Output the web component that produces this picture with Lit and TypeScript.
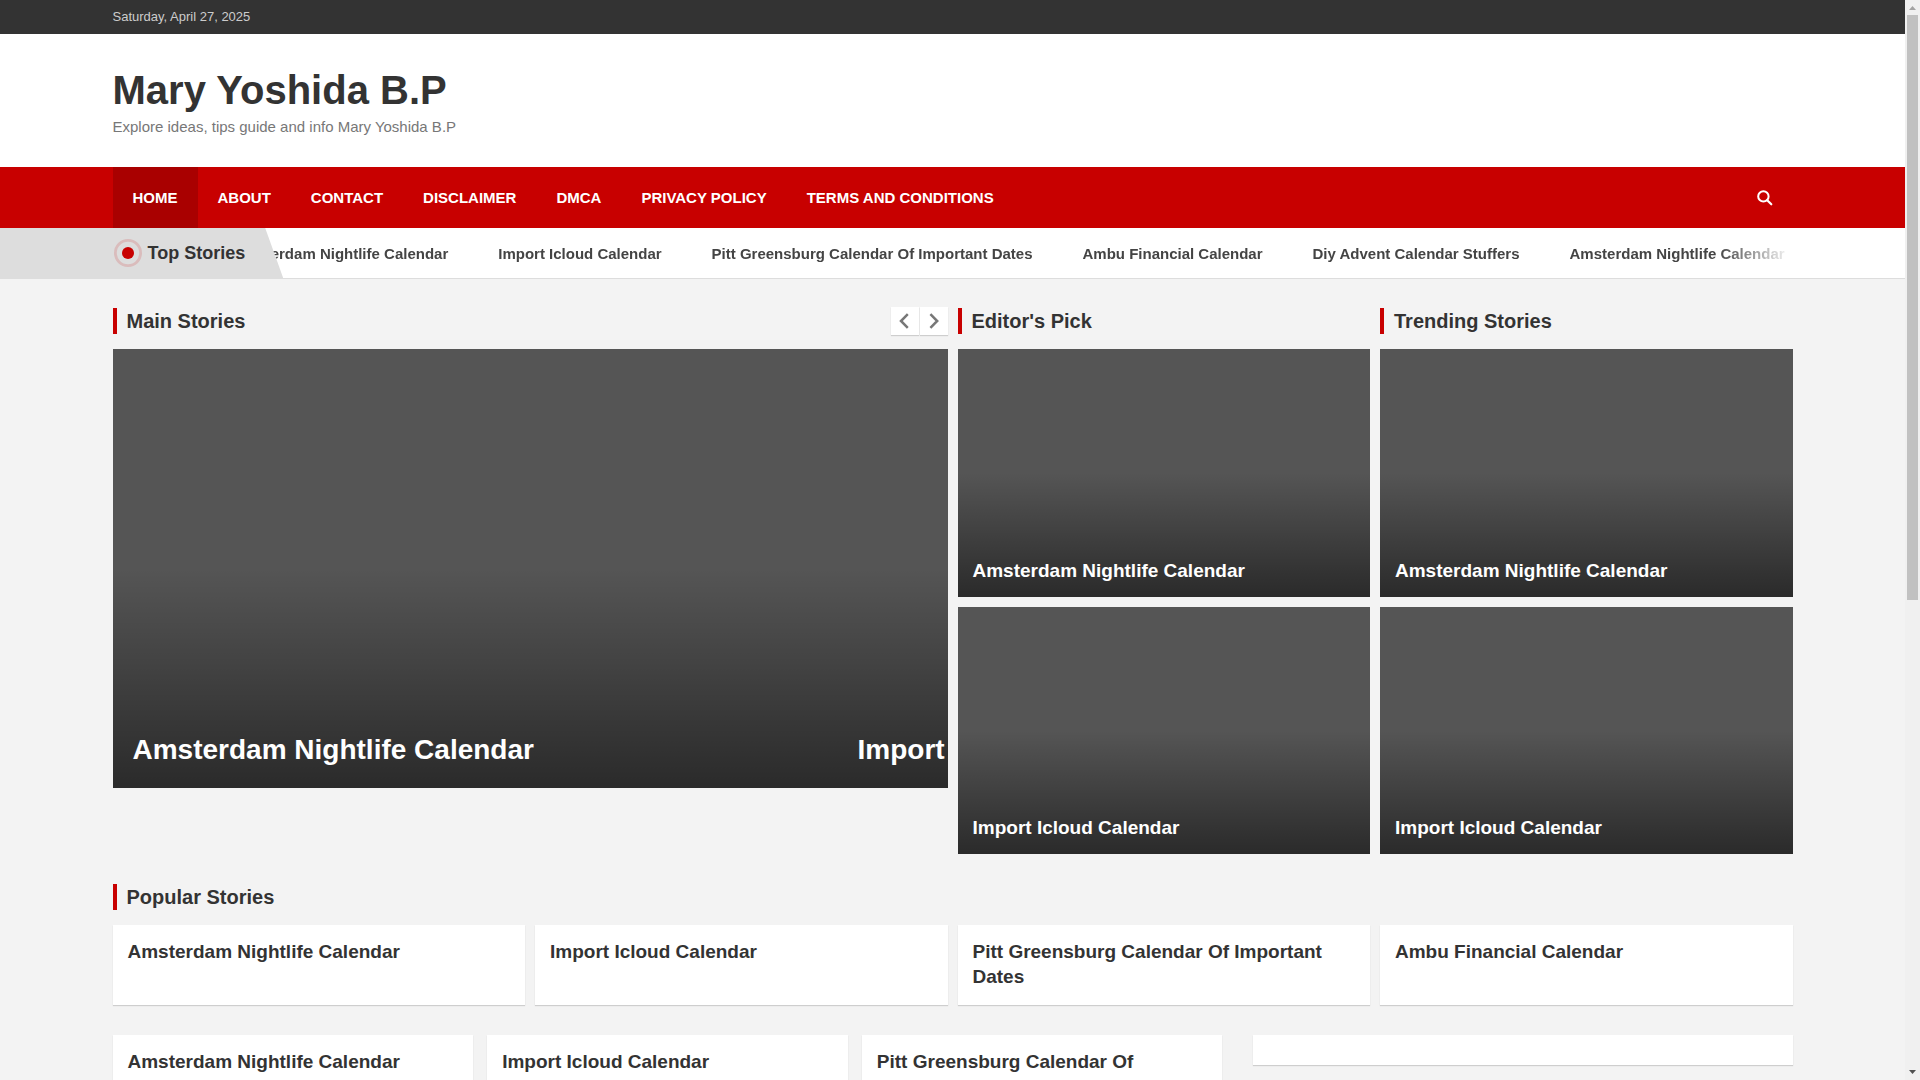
import { LitElement, html, css } from "lit";
import { customElement, property } from "lit/decorators.js";

const NAV = ["Home", "About", "Contact", "Disclaimer", "DMCA", "Privacy Policy", "Terms And Conditions"];

const STORIES = [
  "Amsterdam Nightlife Calendar",
  "Import Icloud Calendar",
  "Pitt Greensburg Calendar Of Important Dates",
  "Ambu Financial Calendar",
  "Diy Advent Calendar Stuffers",
];

const TICKER = [...STORIES, STORIES[0]];

/** Section heading with the red marker; the slot holds optional controls. */
@customElement("section-title")
class SectionTitle extends LitElement {
  @property() label = "";

  static styles = css`
    :host {
      display: flex;
      align-items: center;
      justify-content: space-between;
      height: 26px;
      margin-bottom: 15px;
    }
    .title {
      margin: 0;
      padding-left: 10px;
      border-left: 4px solid #c80000;
      color: #333;
      font-size: 20px;
      line-height: 26px;
      font-weight: 700;
    }
  `;

  render() {
    return html`<h2 class="title">${this.label}</h2>
      <slot></slot>`;
  }
}

/** Dark picture tile with the story title laid at its foot. */
@customElement("story-tile")
class StoryTile extends LitElement {
  @property() label = "";

  static styles = css`
    :host {
      display: flex;
      align-items: flex-end;
      box-sizing: border-box;
      aspect-ratio: 5 / 3;
      padding: 14px 15px;
      background: linear-gradient(transparent 50%, rgba(0, 0, 0, 0.5)) #555;
    }
    .title {
      margin: 0;
      font-size: 19px;
      line-height: 25px;
    }
    .link {
      color: #fff;
      text-decoration: none;
    }
  `;

  render() {
    return html`<h3 class="title"><a class="link" href="#">${this.label}</a></h3>`;
  }
}

/** White card holding a story title. */
@customElement("story-card")
class StoryCard extends LitElement {
  @property() label = "";

  static styles = css`
    :host {
      display: block;
      box-sizing: border-box;
      padding: 14px 15px 16px;
      background: #fff;
      box-shadow: 0 1px 1px rgba(0, 0, 0, 0.15);
    }
    .title {
      margin: 0;
      font-size: 19px;
      line-height: 25px;
    }
    .link {
      color: #333;
      text-decoration: none;
    }
  `;

  render() {
    return html`<h3 class="title"><a class="link" href="#">${this.label}</a></h3>`;
  }
}

@customElement("app-root")
class AppRoot extends LitElement {
  static styles = css`
    :host {
      display: grid;
      grid-template-columns: minmax(0, 1fr) 15px;
      height: 100vh;
      background: #f3f3f3;
      color: #333;
      font-family: "Liberation Sans", Arial, sans-serif;
    }
    .page {
      height: 100vh;
      overflow-x: hidden;
      overflow-y: auto;
      scrollbar-width: none;
    }
    .container {
      box-sizing: border-box;
      width: 100%;
      max-width: 1710px;
      margin: 0 auto;
      padding: 0 15px;
    }

    .topbar {
      background: #333;
      color: #ccc;
      font-size: 13px;
      line-height: 34px;
    }
    .brand {
      padding: 30px 0;
      background: #fff;
    }
    .site-title {
      margin: 0;
      font-size: 40px;
      line-height: 52px;
    }
    .site-title a {
      color: #333;
      text-decoration: none;
    }
    .tagline {
      margin: 0;
      color: #777;
      font-size: 15px;
      line-height: 21px;
    }

    .navbar {
      background: #c80000;
    }
    .nav-row {
      display: flex;
      justify-content: space-between;
    }
    .menu {
      display: flex;
      margin: 0;
      padding: 0;
      list-style: none;
    }
    .menu a {
      display: block;
      padding: 0 20px;
      color: #fff;
      font-size: 15px;
      line-height: 61px;
      font-weight: 700;
      text-transform: uppercase;
      text-decoration: none;
    }
    .menu a.active {
      background: #a90000;
    }
    .search {
      display: flex;
      align-items: center;
      padding: 0 20px;
      border: 0;
      background: none;
      color: #fff;
    }

    .ticker {
      overflow: hidden;
      border-bottom: 1px solid #ddd;
      background: #fff;
    }
    .ticker-row {
      display: flex;
      height: 50px;
    }
    .ticker-label {
      position: relative;
      z-index: 1;
      display: flex;
      flex: none;
      align-items: center;
      gap: 6px;
      padding: 0 38px 0 1px;
      background: #ddd;
      clip-path: polygon(-100vw 0, calc(100% - 18px) 0, 100% 100%, -100vw 100%);
    }
    .ticker-label::before {
      content: "";
      position: absolute;
      top: 0;
      right: 100%;
      width: 100vw;
      height: 100%;
      background: #ddd;
    }
    .ticker-title {
      margin: 0;
      font-size: 18px;
      line-height: 24px;
    }
    .marquee {
      display: flex;
      flex: 1;
      gap: 50px;
      min-width: 0;
      margin-left: -50px;
      overflow: hidden;
      white-space: nowrap;
      mask-image: linear-gradient(to right, #000 calc(100% - 75px), transparent);
    }
    .marquee a {
      flex: none;
      color: #444;
      font-size: 15px;
      line-height: 52px;
      font-weight: 700;
      text-decoration: none;
    }

    .content {
      padding-top: 29px;
    }
    .featured {
      display: grid;
      grid-template-columns: repeat(4, minmax(0, 1fr));
      gap: 10px;
      align-items: start;
      margin-bottom: 30px;
    }
    .wide {
      grid-column: span 2;
    }
    .stack {
      display: grid;
      gap: 10px;
    }
    .arrows {
      display: flex;
      gap: 1px;
    }
    .arrow {
      display: grid;
      place-items: center;
      width: 28px;
      height: 28px;
      padding: 0;
      border: 0;
      background: #fff;
      box-shadow: 0 1px 1px rgba(0, 0, 0, 0.15);
      color: #777;
    }
    .slider {
      display: flex;
      align-items: flex-end;
      aspect-ratio: 19 / 10;
      overflow: hidden;
      background: linear-gradient(transparent 50%, rgba(0, 0, 0, 0.5)) #555;
    }
    .slide {
      box-sizing: border-box;
      flex: 0 0 calc(100% - 110px);
      margin: 0;
      padding: 20px;
      font-size: 28px;
      line-height: 36px;
    }
    .slide a {
      color: #fff;
      text-decoration: none;
    }
    .popular {
      display: grid;
      grid-template-columns: repeat(4, minmax(0, 1fr));
      gap: 10px;
      margin-bottom: 30px;
    }
    .lower {
      display: grid;
      grid-template-columns: minmax(0, 37fr) minmax(0, 18fr);
      gap: 30px;
      align-items: start;
    }
    .posts {
      display: grid;
      grid-template-columns: repeat(3, minmax(0, 1fr));
      gap: 14px;
    }
    .widget {
      padding: 15px;
      background: #fff;
      box-shadow: 0 1px 1px rgba(0, 0, 0, 0.15);
    }

    .scrollbar {
      display: flex;
      flex-direction: column;
      background: #f0f0f0;
    }
    .scrollbar svg {
      flex: none;
      display: block;
    }
    .thumb {
      flex: 39;
      margin: 0 2px;
      background: #c1c1c1;
    }
    .rest {
      flex: 31;
    }
  `;

  render() {
    return html`
      <div class="page">
        <header>
          <div class="topbar"><div class="container">Saturday, April 27, 2025</div></div>
          <div class="brand">
            <div class="container">
              <h1 class="site-title"><a href="#">Mary Yoshida B.P</a></h1>
              <p class="tagline">Explore ideas, tips guide and info Mary Yoshida B.P</p>
            </div>
          </div>
          <nav class="navbar">
            <div class="container nav-row">
              <ul class="menu">
                ${NAV.map((n, i) => html`<li><a class=${i === 0 ? "active" : ""} href="#">${n}</a></li>`)}
              </ul>
              <button class="search" aria-label="Search">
                <svg width="16" height="16" viewBox="0 0 16 16" fill="none" stroke="currentColor" stroke-width="2">
                  <circle cx="6.4" cy="6.4" r="5.2" />
                  <path d="M10.2 10.2 14.3 14.3" stroke-width="2.2" stroke-linecap="round" />
                </svg>
              </button>
            </div>
          </nav>
          <div class="ticker">
            <div class="container ticker-row">
              <div class="ticker-label">
                <svg width="28" height="28" viewBox="0 0 28 28">
                  <circle cx="14" cy="14" r="12.6" fill="none" stroke="#c80000" stroke-opacity="0.15" stroke-width="2.8" />
                  <circle cx="14" cy="14" r="6" fill="#c80000" />
                </svg>
                <h2 class="ticker-title">Top Stories</h2>
              </div>
              <div class="marquee">${TICKER.map((s) => html`<a href="#">${s}</a>`)}</div>
            </div>
          </div>
        </header>

        <main class="container content">
          <div class="featured">
            <section class="wide">
              <section-title label="Main Stories">
                <div class="arrows">
                  <button class="arrow" aria-label="Previous">
                    <svg width="16" height="16" viewBox="0 0 16 16" fill="none" stroke="currentColor" stroke-width="2.5">
                      <path d="M10.8 1.2 4 8l6.8 6.8" />
                    </svg>
                  </button>
                  <button class="arrow" aria-label="Next">
                    <svg width="16" height="16" viewBox="0 0 16 16" fill="none" stroke="currentColor" stroke-width="2.5">
                      <path d="M4.4 1.2 11.2 8l-6.8 6.8" />
                    </svg>
                  </button>
                </div>
              </section-title>
              <div class="slider">
                ${STORIES.slice(0, 2).map((s) => html`<h3 class="slide"><a href="#">${s}</a></h3>`)}
              </div>
            </section>
            ${["Editor's Pick", "Trending Stories"].map(
              (t) => html`<section>
                <section-title label=${t}></section-title>
                <div class="stack">
                  ${STORIES.slice(0, 2).map((s) => html`<story-tile label=${s}></story-tile>`)}
                </div>
              </section>`
            )}
          </div>

          <section>
            <section-title label="Popular Stories"></section-title>
            <div class="popular">
              ${STORIES.slice(0, 4).map((s) => html`<story-card label=${s}></story-card>`)}
            </div>
          </section>

          <div class="lower">
            <div class="posts">
              ${STORIES.slice(0, 3).map((s) => html`<story-card label=${s}></story-card>`)}
            </div>
            <aside class="widget"></aside>
          </div>
        </main>
      </div>
      <div class="scrollbar" aria-hidden="true">
        <svg width="15" height="15" viewBox="0 0 15 15"><path d="M4 10h7L7.5 6z" fill="#a3a3a3" /></svg>
        <div class="thumb"></div>
        <div class="rest"></div>
        <svg width="15" height="15" viewBox="0 0 15 15"><path d="M4 5h7L7.5 9z" fill="#505050" /></svg>
      </div>
    `;
  }
}
